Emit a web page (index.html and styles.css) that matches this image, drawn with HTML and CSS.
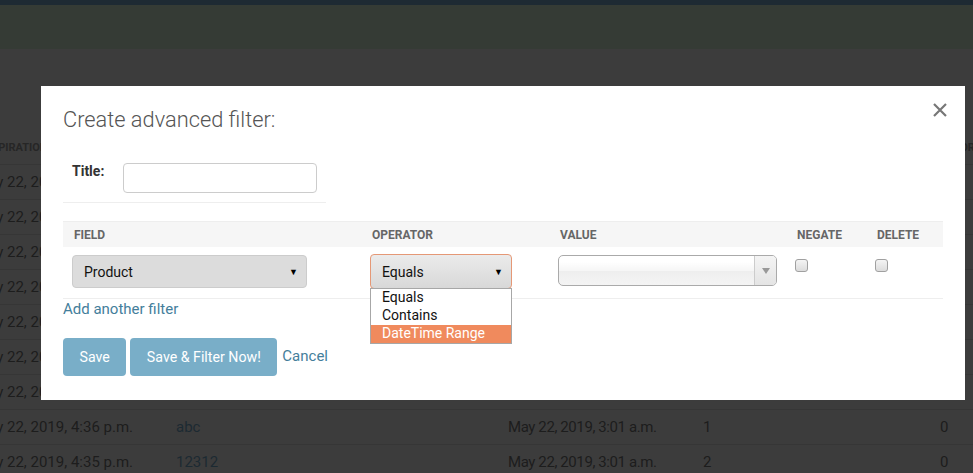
FILE: index.html
```html
<!DOCTYPE html>
<html>
<head>
<meta charset="utf-8">
<link rel="stylesheet" href="styles.css">
</head>
<body>
<div class="topbar"></div>
<div class="header"></div>
<div class="content">
  <div class="bg-table">
    <div class="bg-row bg-head">
      <div class="c1 h1">EXPIRATION DATE</div><div class="c2"></div><div class="c3"></div><div class="c4"></div><div class="c5">ERRORS</div>
    </div>
    <div class="bg-row"><div class="c1">May 22, 2019, 4:42 p.m.</div><div class="c2 lnk">a</div><div class="c3">May 22, 2019, 3:01 a.m.</div><div class="c4">1</div><div class="c5">0</div></div>
    <div class="bg-row"><div class="c1">May 22, 2019, 4:41 p.m.</div><div class="c2 lnk">a</div><div class="c3">May 22, 2019, 3:01 a.m.</div><div class="c4">1</div><div class="c5">0</div></div>
    <div class="bg-row"><div class="c1">May 22, 2019, 4:40 p.m.</div><div class="c2 lnk">a</div><div class="c3">May 22, 2019, 3:01 a.m.</div><div class="c4">1</div><div class="c5">0</div></div>
    <div class="bg-row"><div class="c1">May 22, 2019, 4:39 p.m.</div><div class="c2 lnk">a</div><div class="c3">May 22, 2019, 3:01 a.m.</div><div class="c4">1</div><div class="c5">0</div></div>
    <div class="bg-row"><div class="c1">May 22, 2019, 4:38 p.m.</div><div class="c2 lnk">a</div><div class="c3">May 22, 2019, 3:01 a.m.</div><div class="c4">1</div><div class="c5">0</div></div>
    <div class="bg-row"><div class="c1">May 22, 2019, 4:37 p.m.</div><div class="c2 lnk">a</div><div class="c3">May 22, 2019, 3:01 a.m.</div><div class="c4">1</div><div class="c5">0</div></div>
    <div class="bg-row"><div class="c1">May 22, 2019, 4:37 p.m.</div><div class="c2 lnk">a</div><div class="c3">May 22, 2019, 3:01 a.m.</div><div class="c4">1</div><div class="c5">0</div></div>
    <div class="bg-row"><div class="c1">May 22, 2019, 4:36 p.m.</div><div class="c2 lnk">abc</div><div class="c3">May 22, 2019, 3:01 a.m.</div><div class="c4">1</div><div class="c5">0</div></div>
    <div class="bg-row"><div class="c1">May 22, 2019, 4:35 p.m.</div><div class="c2 lnk">12312</div><div class="c3">May 22, 2019, 3:01 a.m.</div><div class="c4">2</div><div class="c5">0</div></div>
  </div>
</div>

<div class="modal">
  <div class="modal-head">
    <h4 class="modal-title">Create advanced filter:</h4>
    <svg class="close" width="14" height="14" viewBox="0 0 14 14"><path d="M1 1L13 13M13 1L1 13" stroke="#777" stroke-width="2.2" fill="none"/></svg>
  </div>
  <div class="modal-body">
    <div class="form-row">
      <label class="title-label">Title:</label>
      <div class="text-input"></div>
    </div>
    <div class="filter-table">
      <div class="ft-row ft-head">
        <div class="col-field">FIELD</div>
        <div class="col-op">OPERATOR</div>
        <div class="col-val">VALUE</div>
        <div class="col-neg">NEGATE</div>
        <div class="col-del">DELETE</div>
      </div>
      <div class="ft-row ft-body">
        <div class="col-field"><div class="select product"><span>Product</span><span class="arrow">▼</span></div></div>
        <div class="col-op">
          <div class="op-wrap">
            <div class="select operator"><span>Equals</span><span class="arrow">▼</span></div>
            <div class="dropdown">
              <div class="opt">Equals</div>
              <div class="opt">Contains</div>
              <div class="opt active">DateTime Range</div>
            </div>
          </div>
        </div>
        <div class="col-val"><div class="chosen"><span class="chosen-text"></span><span class="chosen-arrow"><svg width="8" height="6" viewBox="0 0 8 6"><path d="M0 0H8L4 6Z" fill="#999"/></svg></span></div></div>
        <div class="col-neg"><span class="checkbox"></span></div>
        <div class="col-del"><span class="checkbox"></span></div>
      </div>
    </div>
    <a class="add-link">Add another filter</a>
    <div class="actions">
      <button class="btn">Save</button>
      <button class="btn">Save &amp; Filter Now!</button>
      <a class="cancel">Cancel</a>
    </div>
  </div>
</div>
</body>
</html>
```
FILE: styles.css
```css
* { box-sizing: border-box; }
html, body { margin: 0; padding: 0; }
body {
  background: #3c3c3c;
  font-family: Roboto, "Liberation Sans", sans-serif;
  font-size: 14px;
  color: #1d1d1d;
  width: 973px;
  height: 473px;
  overflow: hidden;
  position: relative;
}
.topbar { height: 5px; background: #1e2a33; }
.header { height: 44px; background: #353b35; }
.content { padding-top: 81px; }
.bg-table { margin-left: -25px; width: 1010px; font-size: 15px; }
.bg-row {
  display: grid;
  grid-template-columns: 201px 332px 195px 237px 40px;
  height: 35px;
  align-items: center;
  border-bottom: 1px solid #363636;
}
.bg-head { height: 35px; border-bottom: 1px solid #363636; }
.h1 { padding-left: 10px; font-size: 11px; font-weight: 700; color: #262626; }
.bg-head .c5 { font-size: 11px; font-weight: 700; color: #262626; }
.c5 { text-align: left; }
.lnk { color: #1c2a32; }
.c3 { letter-spacing: -0.4px; }

.modal {
  position: absolute;
  left: 41px;
  top: 86px;
  width: 924px;
  height: 314px;
  background: #fff;
  padding: 0 22px;
}
.modal-head {
  display: flex;
  justify-content: space-between;
  align-items: flex-start;
  padding-top: 22px;
  height: 62px;
}
.modal-title {
  margin: 0;
  font-size: 21.8px;
  font-weight: 300;
  color: #555;
  line-height: 24px;
}
.close { margin-top: -5px; margin-right: -4px; }

.form-row {
  display: flex;
  align-items: flex-start;
  width: 263px;
  padding: 15px 0 9px 9px;
  border-bottom: 1px solid #eee;
}
.title-label {
  font-weight: 700;
  color: #333;
  width: 51px;
  padding-top: 0px;
  line-height: 16px;
}
.text-input {
  width: 194px;
  height: 30px;
  border: 1px solid #ccc;
  border-radius: 4px;
}

.filter-table { margin-top: 18px; width: 880px; }
.ft-row { display: grid; grid-template-columns: 298px 188px 237px 80px 77px; }
.ft-head {
  height: 26px;
  background: #f6f6f6;
  border-top: 1px solid #eee;
  align-items: center;
  font-size: 12px;
  font-weight: 700;
  color: #666;
}
.ft-head > div { padding-left: 11px; }
.ft-body {
  height: 52px;
  border-bottom: 1px solid #eee;
  padding-top: 8px;
}
.ft-body > div { padding-left: 9px; }
.select {
  display: flex;
  justify-content: space-between;
  align-items: center;
  height: 33px;
  border: 1px solid #ccc;
  border-radius: 4px;
  padding: 0 8px 0 11px;
  color: #111;
  font-size: 14px;
}
.product { width: 235px; background: #dcdcdc; }
.arrow { font-size: 9px; color: #000; }
.op-wrap { position: relative; width: 142px; }
.operator {
  width: 142px;
  height: 35px;
  margin-top: -1px;
  border: 1px solid #e59876;
  background: linear-gradient(#ebebeb, #d8d8d8);
}
.dropdown {
  position: absolute;
  left: 0;
  top: 34px;
  width: 142px;
  background: #fff;
  border: 1px solid #a7a7a7;
  padding-top: 0;
  z-index: 2;
}
.opt {
  height: 18px;
  line-height: 17px;
  padding-left: 11px;
  color: #111;
  font-size: 14px;
}
.opt.active { background: #f08a5d; color: #fff; }
.chosen {
  display: flex;
  width: 219px;
  height: 31px;
  border: 1px solid #aaa;
  border-radius: 5px;
  background: linear-gradient(#fff 20%, #f6f6f6 50%, #eee 52%, #f4f4f4 100%);
}
.chosen-text { flex: 1; }
.chosen-arrow {
  width: 22px;
  border-left: 1px solid #ccc;
  display: flex;
  align-items: center;
  justify-content: center;
  background: linear-gradient(#f4f4f4, #e4e4e4);
  border-radius: 0 4px 4px 0;
}
.checkbox {
  display: block;
  width: 13px;
  height: 13px;
  margin-top: 4px;
  margin-left: 0;
  border: 1px solid #a0a0a0;
  border-radius: 3px;
  background: linear-gradient(#f4f4f4, #dcdcdc);
}
.add-link {
  display: block;
  color: #447e9b;
  font-size: 15px;
  line-height: 18px;
  margin-top: 1px;
}
.actions {
  display: flex;
  align-items: center;
  gap: 4px;
  margin-top: 20px;
}
.btn {
  height: 38px;
  background: #79aec8;
  color: #fff;
  border: none;
  border-radius: 4px;
  font-family: Roboto, "Liberation Sans", sans-serif;
  font-size: 14.2px;
  padding: 0 16.5px;
}
.cancel { color: #447e9b; font-size: 15px; margin-left: 1px; margin-top: -3px; }
```
